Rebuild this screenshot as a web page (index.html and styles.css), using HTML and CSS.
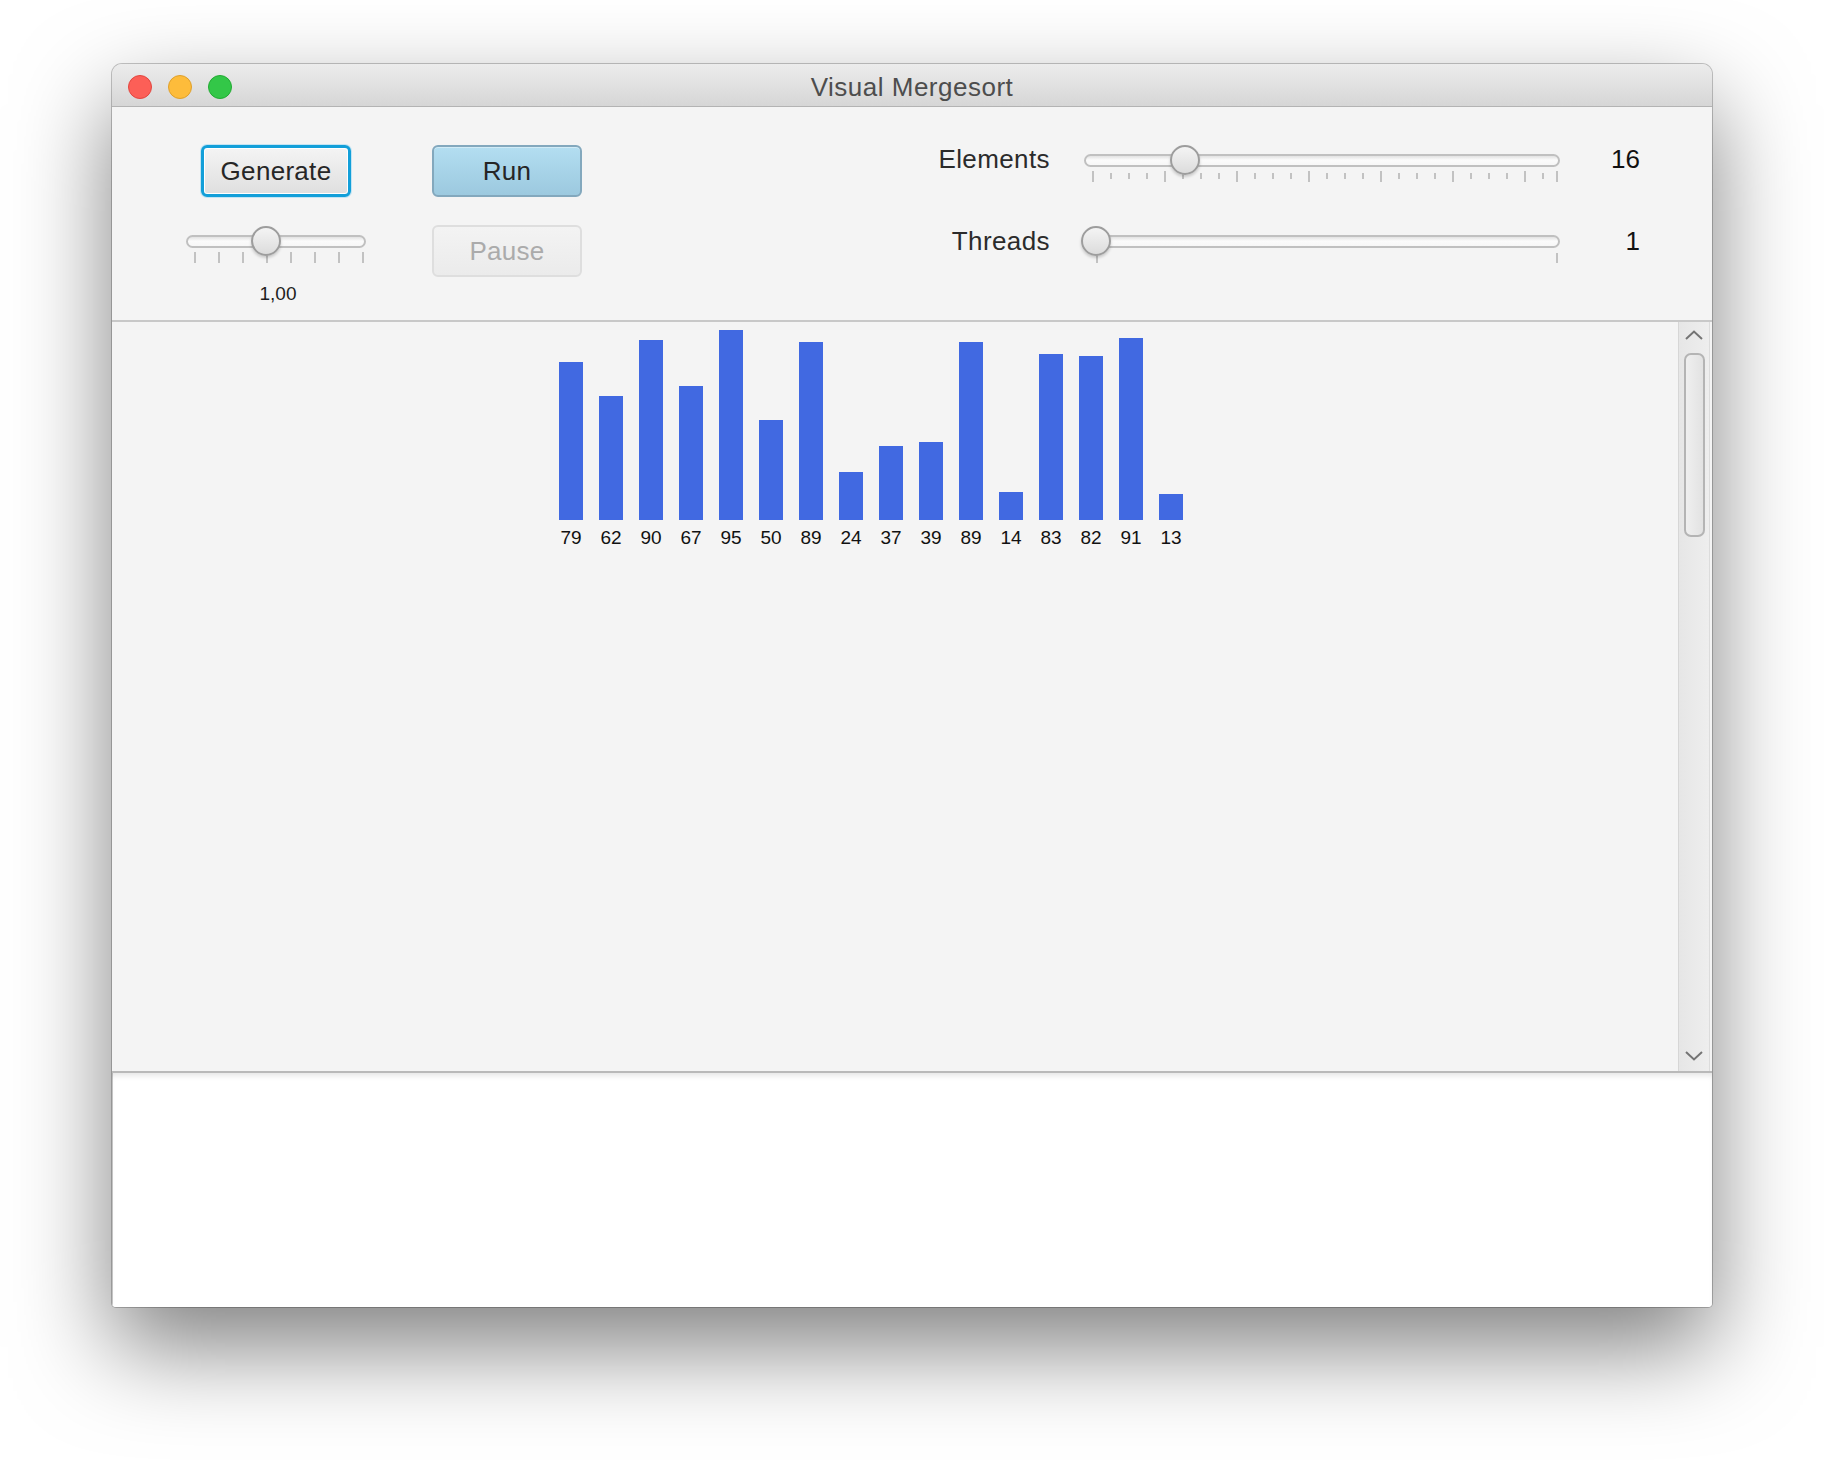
FILE: index.html
```html
<!DOCTYPE html>
<html lang="en">
<head>
<meta charset="utf-8">
<title>Visual Mergesort</title>
<link rel="stylesheet" href="styles.css">
</head>
<body>
<div class="window">
  <div class="titlebar">
    <div class="lights">
      <span class="light red"></span>
      <span class="light yellow"></span>
      <span class="light green"></span>
    </div>
    <div class="title">Visual Mergesort</div>
    <div class="spacer"></div>
  </div>

  <div class="controls">
    <div class="col-left">
      <button class="btn btn-focus">Generate</button>
      <div class="slider speed">
        <div class="track"><span class="thumb thumb-speed"></span></div>
        <svg class="ticks" width="180" height="12" viewBox="0 0 180 12">
          <g stroke="#c2c2c2" stroke-width="2">
            <line x1="9" y1="0" x2="9" y2="11"/><line x1="33" y1="0" x2="33" y2="11"/>
            <line x1="57" y1="0" x2="57" y2="11"/><line x1="81" y1="0" x2="81" y2="11"/>
            <line x1="105" y1="0" x2="105" y2="11"/><line x1="129" y1="0" x2="129" y2="11"/>
            <line x1="153" y1="0" x2="153" y2="11"/><line x1="177" y1="0" x2="177" y2="11"/>
          </g>
        </svg>
      </div>
      <div class="speed-label">1,00</div>
    </div>

    <div class="col-mid">
      <button class="btn btn-default">Run</button>
      <button class="btn btn-disabled" disabled>Pause</button>
    </div>

    <div class="params">
      <div class="param-label">Elements</div>
      <div class="slider wide">
        <div class="track"><span class="thumb thumb-elements"></span></div>
        <svg class="ticks" width="476" height="12" viewBox="0 0 476 12">
          <g stroke="#c2c2c2" stroke-width="2">
            <line x1="9" y1="0" x2="9" y2="11"/><line x1="81" y1="0" x2="81" y2="11"/>
            <line x1="153" y1="0" x2="153" y2="11"/><line x1="225" y1="0" x2="225" y2="11"/>
            <line x1="297" y1="0" x2="297" y2="11"/><line x1="369" y1="0" x2="369" y2="11"/>
            <line x1="441" y1="0" x2="441" y2="11"/><line x1="473" y1="0" x2="473" y2="11"/>
          </g>
          <g stroke="#c2c2c2" stroke-width="2">
            <line x1="27" y1="2" x2="27" y2="8"/><line x1="45" y1="2" x2="45" y2="8"/><line x1="63" y1="2" x2="63" y2="8"/>
            <line x1="99" y1="2" x2="99" y2="8"/><line x1="117" y1="2" x2="117" y2="8"/><line x1="135" y1="2" x2="135" y2="8"/>
            <line x1="171" y1="2" x2="171" y2="8"/><line x1="189" y1="2" x2="189" y2="8"/><line x1="207" y1="2" x2="207" y2="8"/>
            <line x1="243" y1="2" x2="243" y2="8"/><line x1="261" y1="2" x2="261" y2="8"/><line x1="279" y1="2" x2="279" y2="8"/>
            <line x1="315" y1="2" x2="315" y2="8"/><line x1="333" y1="2" x2="333" y2="8"/><line x1="351" y1="2" x2="351" y2="8"/>
            <line x1="387" y1="2" x2="387" y2="8"/><line x1="405" y1="2" x2="405" y2="8"/><line x1="423" y1="2" x2="423" y2="8"/>
            <line x1="459" y1="2" x2="459" y2="8"/>
          </g>
        </svg>
      </div>
      <div class="param-value">16</div>

      <div class="param-label row2">Threads</div>
      <div class="slider wide">
        <div class="track"><span class="thumb thumb-threads"></span></div>
        <svg class="ticks" width="476" height="12" viewBox="0 0 476 12">
          <g stroke="#c2c2c2" stroke-width="2">
            <line x1="13" y1="1" x2="13" y2="11"/><line x1="473" y1="1" x2="473" y2="11"/>
          </g>
        </svg>
      </div>
      <div class="param-value row2">1</div>
    </div>
  </div>

  <div class="chart-pane">
    <div class="chart">
      <div class="bars">
        <div class="col"><div class="bar" style="height:158px"></div><div class="num">79</div></div>
        <div class="col"><div class="bar" style="height:124px"></div><div class="num">62</div></div>
        <div class="col"><div class="bar" style="height:180px"></div><div class="num">90</div></div>
        <div class="col"><div class="bar" style="height:134px"></div><div class="num">67</div></div>
        <div class="col"><div class="bar" style="height:190px"></div><div class="num">95</div></div>
        <div class="col"><div class="bar" style="height:100px"></div><div class="num">50</div></div>
        <div class="col"><div class="bar" style="height:178px"></div><div class="num">89</div></div>
        <div class="col"><div class="bar" style="height:48px"></div><div class="num">24</div></div>
        <div class="col"><div class="bar" style="height:74px"></div><div class="num">37</div></div>
        <div class="col"><div class="bar" style="height:78px"></div><div class="num">39</div></div>
        <div class="col"><div class="bar" style="height:178px"></div><div class="num">89</div></div>
        <div class="col"><div class="bar" style="height:28px"></div><div class="num">14</div></div>
        <div class="col"><div class="bar" style="height:166px"></div><div class="num">83</div></div>
        <div class="col"><div class="bar" style="height:164px"></div><div class="num">82</div></div>
        <div class="col"><div class="bar" style="height:182px"></div><div class="num">91</div></div>
        <div class="col"><div class="bar" style="height:26px"></div><div class="num">13</div></div>
      </div>
    </div>
    <div class="scrollbar">
      <div class="sb-btn sb-up">
        <svg width="18" height="10" viewBox="0 0 18 10"><polyline points="1,9 9,1.5 17,9" fill="none" stroke="#747474" stroke-width="2"/></svg>
      </div>
      <div class="sb-track"><div class="sb-thumb"></div></div>
      <div class="sb-btn sb-down">
        <svg width="18" height="10" viewBox="0 0 18 10"><polyline points="1,1 9,8.5 17,1" fill="none" stroke="#747474" stroke-width="2"/></svg>
      </div>
    </div>
  </div>

  <div class="textarea"></div>
</div>
</body>
</html>
```

FILE: styles.css
```css
html, body {
  margin: 0;
  padding: 0;
  background: #ffffff;
}

body {
  padding: 64px 0 0 112px;
  width: 1824px;
  height: 1468px;
  box-sizing: border-box;
  font-family: "Liberation Sans", Arial, sans-serif;
  overflow: hidden;
}

.window {
  width: 1600px;
  height: 1243px;
  display: flex;
  flex-direction: column;
  border-radius: 10px 10px 4px 4px;
  overflow: hidden;
  background: #f4f4f4;
  box-shadow: 0 0 0 1px rgba(0, 0, 0, 0.22), 0 40px 95px rgba(0, 0, 0, 0.5);
}

/* ---------- title bar ---------- */
.titlebar {
  height: 42px;
  flex: none;
  display: grid;
  grid-template-columns: 1fr auto 1fr;
  align-items: center;
  background: linear-gradient(to bottom, #ececec, #d6d6d6);
  border-bottom: 1px solid #b3b3b3;
}

.lights {
  display: flex;
  gap: 16px;
  padding-left: 16px;
  padding-top: 1px;
}

.light {
  width: 24px;
  height: 24px;
  border-radius: 50%;
  box-sizing: border-box;
}

.red { background: #fc5f57; border: 1px solid #e2463f; }
.yellow { background: #fdbc3b; border: 1px solid #dfa02b; }
.green { background: #33c748; border: 1px solid #22ab33; }

.title {
  font-size: 26px;
  letter-spacing: 0.5px;
  color: #4d4d4d;
  line-height: 42px;
  padding-top: 2px;
}

/* ---------- controls ---------- */
.controls {
  height: 215px;
  flex: none;
  box-sizing: border-box;
  display: flex;
  align-items: flex-start;
  padding: 38px 72px 0 74px;
  border-bottom: 2px solid #c8c8c8;
  background: #f4f4f4;
}

.col-left {
  width: 180px;
  display: flex;
  flex-direction: column;
  align-items: center;
}

.col-mid {
  width: 150px;
  margin-left: 66px;
  display: flex;
  flex-direction: column;
  gap: 28px;
}

.btn {
  width: 150px;
  height: 52px;
  box-sizing: border-box;
  font-family: "Liberation Sans", Arial, sans-serif;
  font-size: 26px;
  letter-spacing: 0.3px;
  color: #262626;
  border-radius: 6px;
  padding: 0;
  margin: 0;
}

.btn-focus {
  border: 3px solid #129fd9;
  background: linear-gradient(to bottom, #f4f4f4, #dfdfdf);
  box-shadow: 0 0 0 1px #c3e4f3, inset 0 0 0 1px #ffffff;
}

.btn-default {
  border: 2px solid #83a8bd;
  background: linear-gradient(to bottom, #b3def1, #9cc9df);
  box-shadow: inset 0 1px 0 rgba(255, 255, 255, 0.4);
}

.btn-disabled {
  border: 2px solid #dedede;
  background: linear-gradient(to bottom, #f3f3f3, #ebebeb);
  color: #ababab;
}

/* ---------- sliders ---------- */
.slider {
  height: 30px;
  display: flex;
  flex-direction: column;
}

.slider.speed {
  width: 180px;
  margin-top: 29px;
}

.slider.wide {
  width: 476px;
}

.track {
  position: relative;
  flex: none;
  height: 13px;
  margin-top: 8.5px;
  box-sizing: border-box;
  border: 2px solid #c0c0c0;
  border-radius: 7px;
  background: linear-gradient(to bottom, #e2e2e2, #fbfbfb 45%, #f7f7f7);
}

.thumb {
  position: absolute;
  top: -10.5px;
  width: 30px;
  height: 30px;
  box-sizing: border-box;
  border-radius: 50%;
  border: 2px solid #9d9d9d;
  background: linear-gradient(to bottom, #f4f4f4, #dcdcdc);
  box-shadow: 0 2px 3px rgba(0, 0, 0, 0.18);
}

.thumb-speed { left: 63px; }
.thumb-elements { left: 84px; }
.thumb-threads { left: -5px; }

.ticks {
  display: block;
  margin-top: 4px;
  flex: none;
}

.speed-label {
  margin-top: 27px;
  font-size: 19px;
  line-height: 22px;
  color: #1e1e1e;
  padding-left: 4px;
}

.params {
  margin-left: auto;
  display: grid;
  grid-template-columns: auto 476px 46px;
  grid-auto-rows: 30px;
  column-gap: 34px;
  row-gap: 51px;
  align-items: center;
}

.param-label {
  font-size: 26px;
  letter-spacing: 0.4px;
  line-height: 30px;
  color: #2b2b2b;
  text-align: right;
  margin-top: -2px;
}

.param-value {
  font-size: 26px;
  line-height: 30px;
  color: #111111;
  text-align: right;
  margin-top: -2px;
}

.param-label.row2,
.param-value.row2 {
  margin-top: 0;
}

/* ---------- chart pane ---------- */
.chart-pane {
  height: 749px;
  flex: none;
  display: flex;
  border-bottom: 2px solid #b9b9b9;
  background: #f4f4f4;
  padding-right: 2px;
}

.chart {
  flex: 1;
  padding: 8px 0 0 439px;
}

.bars {
  display: flex;
  align-items: flex-end;
}

.col {
  width: 40px;
  display: flex;
  flex-direction: column;
  align-items: center;
}

.bar {
  width: 24px;
  background: #4169e1;
}

.num {
  margin-top: 7px;
  font-size: 19px;
  line-height: 22px;
  color: #111111;
  white-space: nowrap;
}

.scrollbar {
  width: 32px;
  box-sizing: border-box;
  display: flex;
  flex-direction: column;
  border-left: 1px solid #d6d6d6;
  border-right: 1px solid #dcdcdc;
  background: linear-gradient(to right, #e6e6e6, #eeeeee);
}

.sb-btn {
  display: flex;
  justify-content: center;
  flex: none;
}

.sb-up {
  height: 24px;
  align-items: center;
  padding-top: 2px;
  box-sizing: border-box;
}

.sb-down {
  height: 30px;
  align-items: center;
}

.sb-track {
  flex: 1;
  display: flex;
  justify-content: center;
  padding-top: 7px;
}

.sb-thumb {
  width: 21px;
  height: 184px;
  box-sizing: border-box;
  border: 2px solid #b4b4b4;
  border-radius: 7px;
  background: linear-gradient(to right, #efefef, #e2e2e2);
}

/* ---------- text area ---------- */
.textarea {
  flex: 1;
  background: #ffffff;
  box-shadow: inset 0 5px 6px -3px rgba(0, 0, 0, 0.12), inset 1px 0 0 #c8c8c8;
}
```
